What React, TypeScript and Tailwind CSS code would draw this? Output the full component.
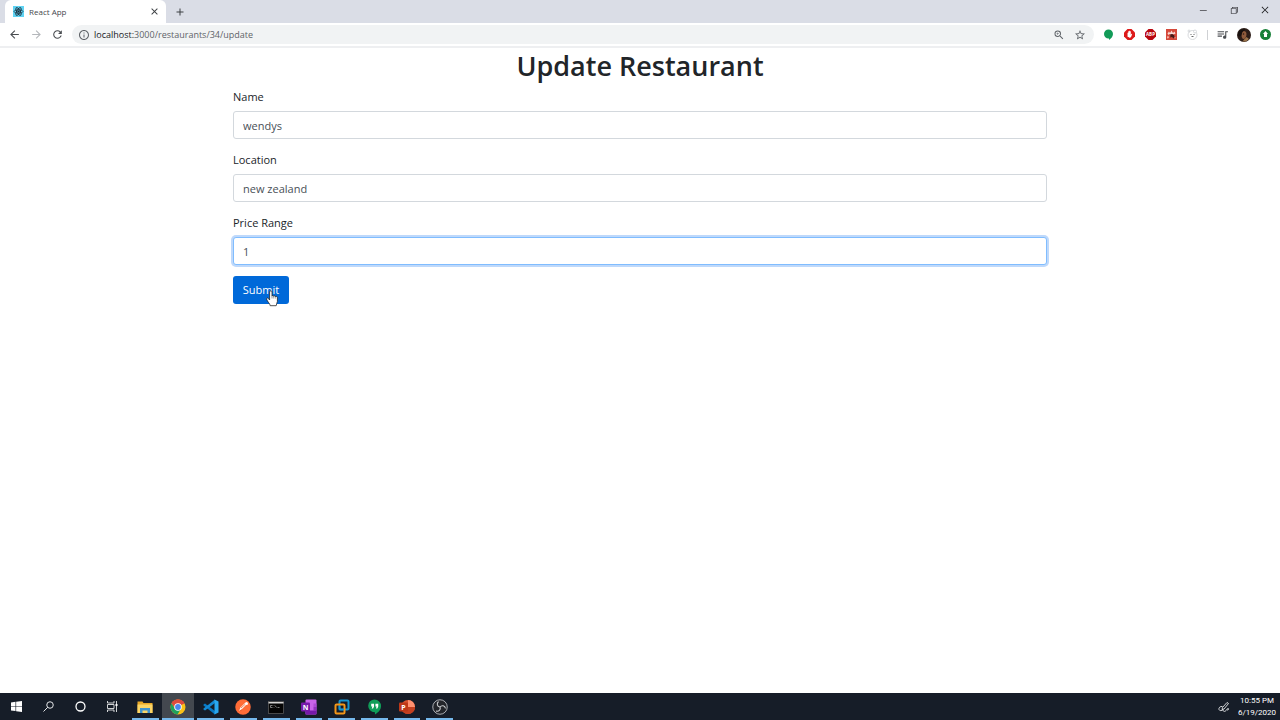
import { useState } from "react";
import type { ReactNode } from "react";
import {
  MdArrowBack,
  MdArrowForward,
  MdRefresh,
  MdInfoOutline,
  MdZoomIn,
  MdStarBorder,
  MdQueueMusic,
  MdClose,
  MdAdd,
} from "react-icons/md";
import { VscChromeMinimize, VscChromeRestore, VscChromeClose } from "react-icons/vsc";

function ReactFavicon() {
  return (
    <svg viewBox="0 0 32 32" className="size-[11px]" aria-hidden="true">
      <rect width="32" height="32" fill="#5fd3f3" />
      <g fill="none" stroke="#1c2733" strokeWidth="2.2">
        <ellipse cx="16" cy="16" rx="13" ry="5" />
        <ellipse cx="16" cy="16" rx="13" ry="5" transform="rotate(60 16 16)" />
        <ellipse cx="16" cy="16" rx="13" ry="5" transform="rotate(120 16 16)" />
      </g>
      <circle cx="16" cy="16" r="3" fill="#1c2733" />
    </svg>
  );
}

function TabStrip() {
  return (
    <header className="flex h-[23px] items-stretch bg-[#dadde6]">
      <div className="ml-[5px] flex w-[161px] items-center rounded-t-md bg-white pr-[6px] pl-2">
        <ReactFavicon />
        <span className="ml-[5px] flex-1 text-[8px] leading-3 text-[#45484c]">React App</span>
        <button type="button" aria-label="Close tab" className="text-[#3c4043]">
          <MdClose className="size-[11px]" />
        </button>
      </div>
      <button type="button" aria-label="New tab" className="ml-2 text-[#3c4043]">
        <MdAdd className="size-3" />
      </button>
      <div className="ml-auto flex items-center pb-1 text-[#202124]">
        <button type="button" aria-label="Minimize" className="flex w-[31px] justify-center">
          <VscChromeMinimize className="size-[10px]" />
        </button>
        <button type="button" aria-label="Restore" className="flex w-[31px] justify-center">
          <VscChromeRestore className="size-[10px]" />
        </button>
        <button type="button" aria-label="Close window" className="flex w-[31px] justify-center">
          <VscChromeClose className="size-[10px]" />
        </button>
      </div>
    </header>
  );
}

function Extensions() {
  return (
    <div className="flex items-center gap-[10px]">
      <svg viewBox="0 0 22 22" className="size-[11px]" aria-hidden="true">
        <path d="M11 1a9 9 0 0 1 9 9c0 5-4 9-8 12v-3h-1a9 9 0 0 1 0-18z" fill="#129b58" />
      </svg>
      <svg viewBox="0 0 22 22" className="size-[11px]" aria-hidden="true">
        <path d="M7 0h8l7 7v8l-7 7H7l-7-7V7z" fill="#dd1a1a" />
        <path d="M7 8c0-1 1.5-1 1.5 0v2V5c0-1 1.700-1 1.700 0v4-5c0-1 1.700-1 1.700 0v5-4c0-1 1.700-1 1.700 0v7l1-2c1-1 2 0 1.500 1l-2 5c-1 2-6 2-7-1z" fill="#fff" />
      </svg>
      <svg viewBox="0 0 22 22" className="size-[11px]" aria-hidden="true">
        <path d="M7 0h8l7 7v8l-7 7H7l-7-7V7z" fill="#b9050f" />
        <text x="11" y="14" textAnchor="middle" fontSize="9" fontWeight="700" fill="#fff">
          ABP
        </text>
      </svg>
      <svg viewBox="0 0 22 22" className="size-[11px]" aria-hidden="true">
        <rect width="22" height="22" fill="#d5483a" />
        <path d="M3 9l3-4 2 3 3-5 3 5 3-3 2 4-4 2-2-1-3 2-3-2-2 2z" fill="#f6d8d2" />
        <path d="M8 11l4-1 4 2 2 5-3 2-3-3-4 1 1-3z" fill="#471a18" />
        <path d="M2 15l3-1 1 4-4 1zM17 15l3 3-3 1z" fill="#f2b3a8" />
      </svg>
      <svg viewBox="0 0 22 22" className="size-[11px]" fill="none" stroke="#c3c6ca" strokeWidth="1.300" aria-hidden="true">
        <circle cx="11" cy="12" r="9" />
        <circle cx="4" cy="4" r="2" />
        <circle cx="16" cy="5" r="3" fill="#fff" />
        <path d="M7 11h2M13 11h2M9 15h4" stroke="#666" strokeWidth="2" />
      </svg>
    </div>
  );
}

function Toolbar() {
  return (
    <nav aria-label="Browser" className="flex h-[25px] items-center border-b-2 border-[#eeeff1] bg-white pr-[9px] pl-2 text-[#4a4d51]">
      <button type="button" aria-label="Back" className="mr-[9px]">
        <MdArrowBack className="size-[13px]" />
      </button>
      <button type="button" aria-label="Forward" className="mr-2 text-[#b4b7bb]">
        <MdArrowForward className="size-[13px]" />
      </button>
      <button type="button" aria-label="Reload" className="mr-2">
        <MdRefresh className="size-[13px]" />
      </button>
      <div className="flex h-[19px] flex-1 items-center rounded-full bg-[#f1f3f4] pr-2 pl-[6px] text-[#5f6368]">
        <MdInfoOutline className="size-3" />
        <p className="ml-1 flex-1 text-[9px] leading-4">
          <span className="text-[#202124]">localhost:</span>3000/restaurants/34/update
        </p>
        <button type="button" aria-label="Zoom" className="mr-[9px]">
          <MdZoomIn className="size-3" />
        </button>
        <button type="button" aria-label="Bookmark this page">
          <MdStarBorder className="size-3" />
        </button>
      </div>
      <div className="ml-[9px] flex items-center">
        <Extensions />
        <span className="ml-[9px] h-[10px] w-px bg-[#cfd1d4]" />
        <MdQueueMusic className="ml-2 size-[13px]" />
        <svg viewBox="0 0 28 28" className="ml-2 size-[14px]" aria-hidden="true">
          <circle cx="14" cy="14" r="14" fill="#2c1d18" />
          <path d="M10 7c4-3 9 0 9 5s-2 9-5 10-5-4-5-8z" fill="#8f5b3c" />
          <path d="M2 10c3-6 9-9 15-7l-6 5-3 8-5 1z" fill="#17110f" />
          <path d="M19 18l5 4-6 5-7 0 4-5z" fill="#9a734a" />
          <circle cx="13" cy="12" r="1.500" fill="#2c1d18" />
        </svg>
        <svg viewBox="0 0 22 22" className="ml-[9px] size-[11px]" aria-hidden="true">
          <circle cx="11" cy="11" r="11" fill="#178038" />
          <path d="M11 4l5 6h-2v6H8v-6H6z" fill="#fff" />
        </svg>
      </div>
    </nav>
  );
}

function Field(props: { id: string; label: string; value: string; onChange: (value: string) => void; active?: boolean }) {
  const frame = props.active
    ? "border-[#80bdff] ring-2 ring-[#bfd9fb]"
    : "border-[#d3d8dd]";
  return (
    <div className="flex flex-col gap-[5px]">
      <label htmlFor={props.id} className="text-[11px] leading-[18px] text-[#212529]">
        {props.label}
      </label>
      <input
        id={props.id}
        type={props.id === "price-range" ? "number" : "text"}
        value={props.value}
        onChange={(event) => props.onChange(event.target.value)}
        className={`h-7 w-full rounded-[3px] border bg-white px-[9px] text-[11px] text-[#495057] outline-none ${frame}`}
      />
    </div>
  );
}

function HandCursor() {
  return (
    <svg viewBox="0 0 20 28" className="pointer-events-none absolute top-[14px] left-[33px] h-[17px] w-3" aria-hidden="true">
      <path
        d="M6 3c0-2.500 4-2.500 4 0v7c0-1.500 3-1.500 3 .5 0-1.500 3-1.500 3 .8 0-1.300 3-1 3 1.200V19c0 2-2 4-2 7H7c0-3-5-7-6-11-.4-2 2-2.500 3-1l2 2.500z"
        fill="#fff"
        stroke="#222"
        strokeWidth="1.300"
        strokeLinejoin="round"
      />
      <path d="M10 10v4M13 11v3M16 12v2" stroke="#555" strokeWidth="1" />
    </svg>
  );
}

function UpdateRestaurant() {
  const [name, setName] = useState("wendys");
  const [location, setLocation] = useState("new zealand");
  const [price, setPrice] = useState("1");
  return (
    <main className="flex-1 bg-white px-4">
      <h1 className="text-center text-[27px] leading-9 font-semibold text-[#212529]">Update Restaurant</h1>
      <form className="mx-auto mt-1 max-w-[814px]" onSubmit={(event) => event.preventDefault()}>
        <div className="flex flex-col gap-3">
          <Field id="name" label="Name" value={name} onChange={setName} />
          <Field id="location" label="Location" value={location} onChange={setLocation} />
          <Field id="price-range" label="Price Range" value={price} onChange={setPrice} active />
        </div>
        <div className="relative mt-[11px] w-fit">
          <button type="submit" className="h-7 w-14 rounded-[3px] bg-[#0069d9] text-[11px] text-white">
            Submit
          </button>
          <HandCursor />
        </div>
      </form>
    </main>
  );
}

function Explorer() {
  return (
    <svg viewBox="0 0 32 28" className="h-[14px] w-4" aria-hidden="true">
      <path d="M1 3h10l2 3h18v20H1z" fill="#e9a928" />
      <path d="M1 9h30v17H1z" fill="#fbd566" />
      <path d="M6 16h20v10h-5v-5H11v5H6z" fill="#3f94cf" />
    </svg>
  );
}

function Chrome() {
  return (
    <svg viewBox="0 0 32 32" className="size-4" aria-hidden="true">
      <circle cx="16" cy="16" r="15" fill="#fbc116" />
      <path d="M16 16L3 8.500A15 15 0 0 1 29 8.500z" fill="#dd4b3e" />
      <path d="M16 9H29.300A15 15 0 0 0 3 8.500L10 19.500z" fill="#dd4b3e" />
      <path d="M3 8.500A15 15 0 0 0 15 31l7-11.500-12 0z" fill="#1fa15d" />
      <circle cx="16" cy="16" r="7.500" fill="#fff" />
      <circle cx="16" cy="16" r="5.800" fill="#4a87ee" />
    </svg>
  );
}

function VsCode() {
  return (
    <svg viewBox="0 0 32 32" className="size-4" aria-hidden="true">
      <path d="M1 11l3-2 20 15v7L1 13z" fill="#0878c4" />
      <path d="M1 21l3 2L24 8V1L1 19z" fill="#1389d4" />
      <path d="M23 1l8 4v22l-8 4z" fill="#29a7ef" />
    </svg>
  );
}

function Postman() {
  return (
    <svg viewBox="0 0 32 32" className="size-4" aria-hidden="true">
      <circle cx="16" cy="16" r="15.500" fill="#ff6c37" />
      <path d="M8 24l3-7 9-9 3 3-9 9z" fill="#fff" />
      <path d="M12 18l9-8M9 24l5-2" stroke="#e45c2a" strokeWidth="1.500" />
      <circle cx="23" cy="9" r="3" fill="#fff" />
    </svg>
  );
}

function Terminal() {
  return (
    <svg viewBox="0 0 32 26" className="h-[13px] w-4" aria-hidden="true">
      <rect x="1" y="1" width="30" height="24" fill="#050505" stroke="#5c5c5c" strokeWidth="1.500" />
      <path d="M1 2h30v3H1z" fill="#d4d4d4" />
      <path d="M5 9h4M5 9v4h4M12 9v1M12 12v1M14 9l3 4M19 13h4" stroke="#bbb" strokeWidth="1.300" fill="none" />
    </svg>
  );
}

function OneNote() {
  return (
    <svg viewBox="0 0 32 32" className="size-4" aria-hidden="true">
      <rect x="9" y="1" width="22" height="30" rx="2" fill="#ca64ea" />
      <path d="M25 9h6v7h-6z" fill="#ae4bd5" />
      <path d="M25 16h6v7h-6z" fill="#9332bf" />
      <path d="M9 23h22v6q0 2-2 2H9z" fill="#7719aa" />
      <rect x="0" y="7" width="18" height="18" rx="2" fill="#7719aa" />
      <text x="9" y="21" textAnchor="middle" fontSize="14" fontWeight="700" fill="#fff">
        N
      </text>
    </svg>
  );
}

function VirtualMachine() {
  return (
    <svg viewBox="0 0 32 32" className="size-4" fill="none" strokeWidth="4" aria-hidden="true">
      <rect x="11" y="3" width="18" height="18" rx="2" stroke="#1494d2" />
      <rect x="3" y="11" width="18" height="18" rx="2" stroke="#f39619" />
      <path d="M11 14v7h9" stroke="#1494d2" strokeWidth="3" />
    </svg>
  );
}

function Hangouts() {
  return (
    <svg viewBox="0 0 32 34" className="h-4 w-[15px]" aria-hidden="true">
      <path d="M16 1a14 14 0 0 1 14 14c0 8-6 14-13 18v-5h-1a13.500 13.500 0 0 1 0-27z" fill="#109d58" />
      <path d="M9 10h6v6l-2 4h-3l1.500-4H9zM18 10h6v6l-2 4h-3l1.500-4H18z" fill="#fff" />
    </svg>
  );
}

function PowerPoint() {
  return (
    <svg viewBox="0 0 32 32" className="size-4" aria-hidden="true">
      <circle cx="18" cy="16" r="14" fill="#d9512e" />
      <path d="M18 2a14 14 0 0 1 14 14H18z" fill="#ff9170" />
      <path d="M4 16h28a14 14 0 0 1-28 0z" fill="#c4401f" />
      <rect x="0" y="7" width="18" height="18" rx="2" fill="#bd3818" />
      <text x="9" y="21" textAnchor="middle" fontSize="14" fontWeight="700" fill="#fff">
        P
      </text>
    </svg>
  );
}

function Obs() {
  return (
    <svg viewBox="0 0 32 32" className="size-4" aria-hidden="true">
      <circle cx="16" cy="16" r="14.500" fill="#23252a" stroke="#b9bbbf" strokeWidth="1.800" />
      <g fill="none" stroke="#c8cacd" strokeWidth="2.200">
        <path d="M16 16c-6-1-7-7-3-11" />
        <path d="M16 16c-6-1-7-7-3-11" transform="rotate(120 16 16)" />
        <path d="M16 16c-6-1-7-7-3-11" transform="rotate(240 16 16)" />
      </g>
    </svg>
  );
}

const apps: { name: string; icon: ReactNode; active?: boolean }[] = [
  { name: "File Explorer", icon: <Explorer /> },
  { name: "Chrome", icon: <Chrome />, active: true },
  { name: "Visual Studio Code", icon: <VsCode /> },
  { name: "Postman", icon: <Postman /> },
  { name: "Command Prompt", icon: <Terminal /> },
  { name: "OneNote", icon: <OneNote /> },
  { name: "Virtual machines", icon: <VirtualMachine /> },
  { name: "Hangouts", icon: <Hangouts /> },
  { name: "PowerPoint", icon: <PowerPoint /> },
  { name: "OBS Studio", icon: <Obs /> },
];

function SystemButton({ label, children }: { label: string; children: ReactNode }) {
  return (
    <button type="button" aria-label={label} className="flex w-8 items-center justify-center">
      {children}
    </button>
  );
}

function Taskbar() {
  return (
    <footer className="flex h-[27px] items-stretch bg-[#161d28] text-white">
      <SystemButton label="Start">
        <svg viewBox="0 0 22 22" className="size-[11px]" fill="#fff" aria-hidden="true">
          <path d="M0 3l9-1.300v8.600H0zM10.300 1.500L22 0v10.300H10.300zM0 11.500h9v8.700L0 19zM10.300 11.500H22V22l-11.700-1.600z" />
        </svg>
      </SystemButton>
      <SystemButton label="Search">
        <svg viewBox="0 0 22 22" className="size-[11px]" fill="none" stroke="#e4e6e8" strokeWidth="2" aria-hidden="true">
          <circle cx="14" cy="8" r="6.500" />
          <path d="M9.500 12.500L1 21" />
        </svg>
      </SystemButton>
      <SystemButton label="Cortana">
        <svg viewBox="0 0 22 22" className="size-[11px]" fill="none" stroke="#fff" strokeWidth="2.600" aria-hidden="true">
          <circle cx="11" cy="11" r="9" />
        </svg>
      </SystemButton>
      <SystemButton label="Task View">
        <svg viewBox="0 0 22 22" className="size-[11px]" fill="none" stroke="#e4e6e8" strokeWidth="1.800" aria-hidden="true">
          <path d="M1 0v4h13V0M1 22v-4h13v4M1 7h13v8H1zM19 0v22" />
          <path d="M17 6h4v4h-4z" fill="#fff" stroke="none" />
        </svg>
      </SystemButton>
      <div className="ml-px grid w-[327px] grid-cols-10">
        {apps.map((app) => (
          <button
            key={app.name}
            type="button"
            aria-label={app.name}
            className={
              app.active
                ? "flex flex-col items-center border-b-2 border-[#76b9ed] bg-[#43484f] pt-[6px]"
                : "mx-[3px] flex flex-col items-center border-b-2 border-[#76b9ed] pt-[6px]"
            }
          >
            <span className="flex h-4 items-center">{app.icon}</span>
          </button>
        ))}
      </div>
      <div className="ml-auto flex items-center pr-1">
        <svg viewBox="0 0 24 24" className="mr-2 size-3" fill="none" stroke="#e4e6e8" strokeWidth="1.800" aria-hidden="true">
          <path d="M9 13L18 3l3 2-9 11-4 1zM9 11c-5-1-8 3-7 6s6 3 8 0M10 17c0 6 5 4 7 1 2-4 5-4 4-1-1 2-3 1-3 0" />
        </svg>
        <div className="text-center font-[Roboto,sans-serif] text-[8px] leading-3">
          <p>10:55 PM</p>
          <p>6/19/2020</p>
        </div>
      </div>
    </footer>
  );
}

export default function App() {
  return (
    <div className="flex min-h-screen flex-col bg-white font-['Open_Sans','Noto_Sans',sans-serif]">
      <TabStrip />
      <Toolbar />
      <UpdateRestaurant />
      <Taskbar />
    </div>
  );
}
